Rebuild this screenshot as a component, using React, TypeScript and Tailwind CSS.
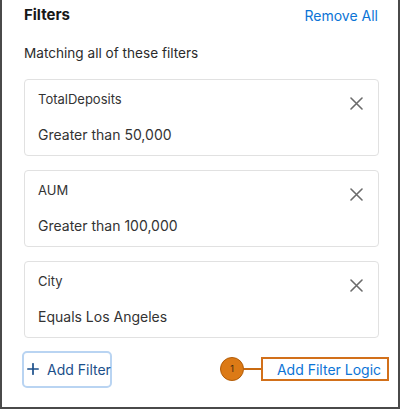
import React from "react";

const XIcon = () => (
  <svg width="13" height="13" viewBox="0 0 13 13" fill="none" className="shrink-0">
    <path d="M1 1L12 12M12 1L1 12" stroke="#6b6b6b" strokeWidth="1.6" strokeLinecap="round" />
  </svg>
);

const PlusIcon = () => (
  <svg width="12" height="12" viewBox="0 0 12 12" fill="none" className="shrink-0">
    <path d="M6 0.8V11.2M0.8 6H11.2" stroke="#1b4f8a" strokeWidth="1.7" strokeLinecap="round" />
  </svg>
);

const filters = [
  { label: "TotalDeposits", value: "Greater than 50,000" },
  { label: "AUM", value: "Greater than 100,000" },
  { label: "City", value: "Equals Los Angeles" },
];

export default function App() {
  return (
    <div
      className="w-[400px] h-[409px] bg-white border-x-2 border-b-2 border-[#4a4a4a] overflow-hidden"
      style={{ fontFamily: "Inter, 'Open Sans', sans-serif" }}
    >
      <div className="pl-[22px] pr-[20px] pt-[3px]">
        <div className="flex items-center justify-between h-[24px]">
          <span className="text-[15px] font-bold text-[#181818]">Filters</span>
          <span className="text-[14px] text-[#0b74d6]">Remove All</span>
        </div>
        <div className="mt-[16px] h-[20px] flex items-center text-[13.6px] text-[#2b2b2b]">
          Matching all of these filters
        </div>
        <div className="mt-[16px] flex flex-col gap-[14.5px]">
          {filters.map((f) => (
            <div
              key={f.label}
              className="w-[355px] h-[76.5px] border border-[#e1e1e1] rounded-[4px] pl-[13px] pr-[16px] pt-[11px] relative"
            >
              <div className="text-[13px] text-[#333] h-[18px] flex items-center">{f.label}</div>
              <div className="mt-[15px] text-[14px] text-[#333] h-[20px] flex items-center">{f.value}</div>
              <div className="absolute right-[15px] top-[17px]">
                <XIcon />
              </div>
            </div>
          ))}
        </div>
        <div className="mt-[13px] flex items-center justify-between">
          <div className="ml-[-2px] w-[90px] h-[37px] border-2 border-[#b9d4f2] rounded-[5px] flex items-center pl-[3px] gap-[8px]">
            <PlusIcon />
            <span className="text-[14px] text-[#1b4f8a] whitespace-nowrap">Add Filter</span>
          </div>
          <div className="flex items-center mr-[-11px]">
            <div className="shrink-0 w-[24px] h-[24px] rounded-full bg-[#dc7a16] border border-[#b25c08] flex items-center justify-center text-[9px] text-[#3a2a10]">
              1
            </div>
            <div className="shrink-0 w-[17px] h-[2px] bg-[#c96a10]" />
            <div className="shrink-0 w-[128px] h-[24px] border-2 border-[#d2701a] flex items-center justify-center">
              <span className="text-[14px] text-[#0b74d6] whitespace-nowrap ml-[8px]">Add Filter Logic</span>
            </div>
          </div>
        </div>
      </div>
    </div>
  );
}
